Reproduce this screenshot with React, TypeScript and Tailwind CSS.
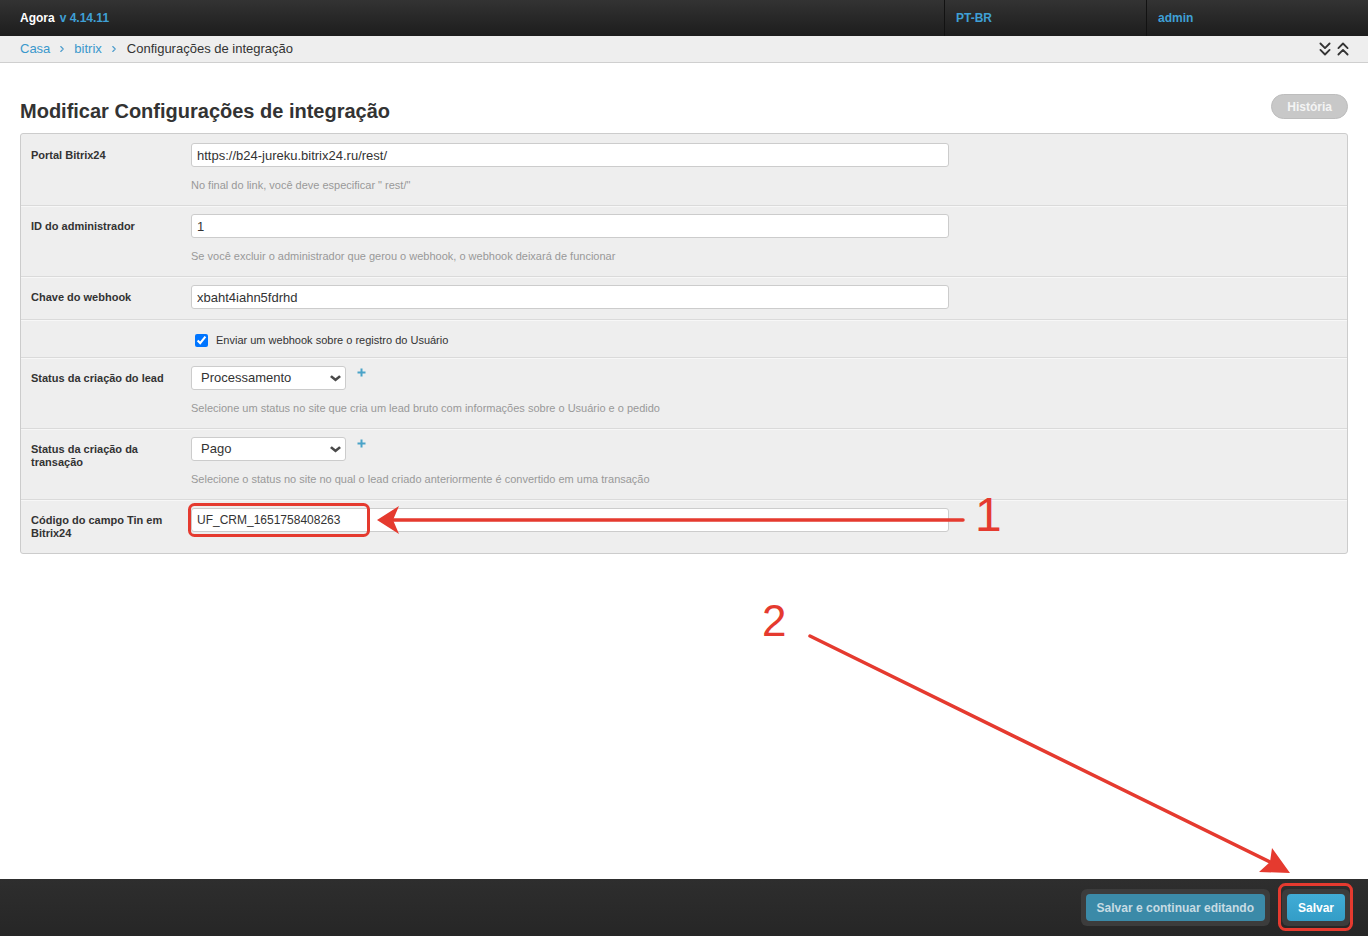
import { ChevronRight, ChevronsDown, ChevronsUp } from "lucide-react";
import type { ReactNode } from "react";

const font = "font-['Liberation_Sans',Arial,sans-serif]";

function Plus() {
  return (
    <svg width="9" height="9" viewBox="0 0 9 9" className="mt-[2px] ml-[11px] shrink-0">
      <path d="M4.5 0.5v8M0.5 4.5h8" stroke="#4aa3c8" strokeWidth="2" />
    </svg>
  );
}

function Caret() {
  return (
    <svg width="11" height="7" viewBox="0 0 11 7">
      <path d="M0 2 L1.8 0.2 L5.5 3.2 L9.2 0.2 L11 2 L5.5 6.6 Z" fill="#4a4a4a" />
    </svg>
  );
}

function Select({ value }: { value: string }) {
  return (
    <div className="flex h-6 w-[155px] items-center justify-between rounded-[3px] border border-[#ccc] bg-white pr-[4px] pl-[9px] text-[13px] text-[#333]">
      <span>{value}</span>
      <Caret />
    </div>
  );
}

function Field({ value, small }: { value: string; small?: boolean }) {
  return (
    <input
      readOnly
      defaultValue={value}
      className={`block h-6 w-[758px] rounded-[3px] border border-[#ccc] bg-white px-[5px] text-[#333] outline-none ${
        small ? "text-[12px]" : "text-[13px]"
      }`}
    />
  );
}

function Help({ children }: { children: ReactNode }) {
  return <div className="mt-[10px] mb-[2px] text-[11px] leading-4 text-[#999]">{children}</div>;
}

function Row({
  label,
  children,
  first,
  last,
}: {
  label?: string;
  children: ReactNode;
  first?: boolean;
  last?: boolean;
}) {
  return (
    <div
      className={`flex px-[10px] ${
        first ? "pt-[9px]" : "border-t border-[#dadada] pt-2 shadow-[inset_0_1px_0_#f7f7f7]"
      } ${last ? "pb-[13px]" : "pb-[10px]"}`}
    >
      <div className="w-[150px] shrink-0 pt-[6px] text-[11px] leading-[13px] font-bold text-[#333]">
        {label}
      </div>
      <div className="ml-[10px]">{children}</div>
    </div>
  );
}

export default function App() {
  return (
    <div className={`relative flex h-[936px] w-full flex-col overflow-hidden bg-white ${font}`}>
      {/* top bar */}
      <div className="flex h-[36px] bg-linear-to-b from-[#333333] to-[#1d1d1d] text-[12px] font-bold">
        <div className="flex flex-1 items-center pl-5">
          <span className="text-white">Agora</span>
          <span className="ml-[5px] text-[#3fa0d6]">v 4.14.11</span>
        </div>
        <div className="flex w-[202px] items-center border-l border-[#121212] pl-[11px] text-[#3fa0d6]">PT-BR</div>
        <div className="flex w-[222px] items-center border-l border-[#121212] pl-[11px] text-[#3fa0d6]">admin</div>
      </div>

      {/* breadcrumb */}
      <div className="flex h-[27px] items-center justify-between border-b border-[#cfcfcf] bg-[#eeeeee] px-5 text-[13px]">
        <div className="flex items-center">
          <span className="text-[#3a98cc]">Casa</span>
          <ChevronRight size={10} strokeWidth={2.6} className="mx-[7px] text-[#4d9ccc]" />
          <span className="text-[#3a98cc]">bitrix</span>
          <ChevronRight size={10} strokeWidth={2.6} className="mr-[8px] ml-[7px] text-[#4d9ccc]" />
          <span className="text-[#333]">Configurações de integração</span>
        </div>
        <div className="-mr-[6px] flex items-center text-[#333]">
          <ChevronsDown size={22} strokeWidth={2} />
          <ChevronsUp size={22} strokeWidth={2} className="-ml-[4px]" />
        </div>
      </div>

      {/* content */}
      <div className="flex-1 px-5">
        <div className="mt-[31px] flex items-start justify-between">
          <h1 className="mt-[5px] text-[20px] leading-[24px] font-bold text-[#333]">
            Modificar Configurações de integração
          </h1>
          <button className="h-[25px] rounded-full border border-[#bdbdbd] bg-[#c8c8c8] px-[15px] text-[12px] font-bold text-[#f4f4f4]">
            História
          </button>
        </div>

        <div className="mt-[10px] rounded-[3px] border border-[#cccccc] bg-[#eeeeee]">
          <Row label="Portal Bitrix24" first>
            <Field value="https://b24-jureku.bitrix24.ru/rest/" />
            <Help>No final do link, você deve especificar " rest/"</Help>
          </Row>
          <Row label="ID do administrador">
            <Field value="1" />
            <Help>Se você excluir o administrador que gerou o webhook, o webhook deixará de funcionar</Help>
          </Row>
          <Row label="Chave do webhook">
            <Field value="xbaht4iahn5fdrhd" />
          </Row>
          <div className="flex border-t border-[#dadada] px-[10px] pt-[12px] pb-[9px] shadow-[inset_0_1px_0_#f7f7f7]">
            <div className="w-[150px] shrink-0" />
            <label className="ml-[10px] flex h-4 items-center text-[11px] text-[#333]">
              <input type="checkbox" defaultChecked className="ml-[4px] h-[13px] w-[13px] accent-[#0075ff]" />
              <span className="ml-[8px]">Enviar um webhook sobre o registro do Usuário</span>
            </label>
          </div>
          <Row label="Status da criação do lead">
            <div className="flex items-start">
              <Select value="Processamento" />
              <Plus />
            </div>
            <Help>Selecione um status no site que cria um lead bruto com informações sobre o Usuário e o pedido</Help>
          </Row>
          <Row label="Status da criação da transação">
            <div className="flex items-start">
              <Select value="Pago" />
              <Plus />
            </div>
            <Help>Selecione o status no site no qual o lead criado anteriormente é convertido em uma transação</Help>
          </Row>
          <Row label="Código do campo Tin em Bitrix24" last>
            <Field value="UF_CRM_1651758408263" small />
          </Row>
        </div>
      </div>

      {/* bottom toolbar */}
      <div className="flex h-[57px] items-center justify-end bg-linear-to-b from-[#2e2e2e] to-[#262626] pr-[18px]">
        <div className="rounded-[6px] bg-[#3c3c3c] p-[5px]">
          <button className="h-[27px] rounded-[4px] bg-[#3b8aa8] px-[11px] text-[12px] font-bold text-[#c6dbe3]">
            Salvar e continuar editando
          </button>
        </div>
        <div className="ml-[12px] rounded-[6px] bg-[#3c3c3c] p-[5px]">
          <button className="h-[27px] rounded-[4px] bg-linear-to-b from-[#41acd6] to-[#339dc7] px-[11px] text-[12px] font-bold text-white">
            Salvar
          </button>
        </div>
      </div>

      {/* annotations */}
      <svg className="pointer-events-none absolute top-0 left-0" width="1368" height="936">
        <rect x="189.5" y="504.5" width="179" height="31" rx="5" fill="none" stroke="#e53a2f" strokeWidth="3" />
        <line x1="393" y1="520" x2="963" y2="520" stroke="#e53a2f" strokeWidth="3.5" strokeLinecap="round" />
        <polygon points="377,520 399,506 393,520 399,534" fill="#e53a2f" />
        <line x1="810" y1="636" x2="1272" y2="863" stroke="#e53a2f" strokeWidth="3.5" strokeLinecap="round" />
        <polygon points="1290,873 1272,848 1270,862 1259,872" fill="#e53a2f" />
        <rect x="1279.5" y="884.5" width="72" height="45" rx="6" fill="none" stroke="#e53a2f" strokeWidth="3" />
      </svg>
      <div className="pointer-events-none absolute top-[491px] left-[975px] text-[48px] leading-[48px] text-[#e53a2f]">1</div>
      <div className="pointer-events-none absolute top-[599px] left-[762px] text-[44px] leading-[44px] text-[#e53a2f]">2</div>
    </div>
  );
}
